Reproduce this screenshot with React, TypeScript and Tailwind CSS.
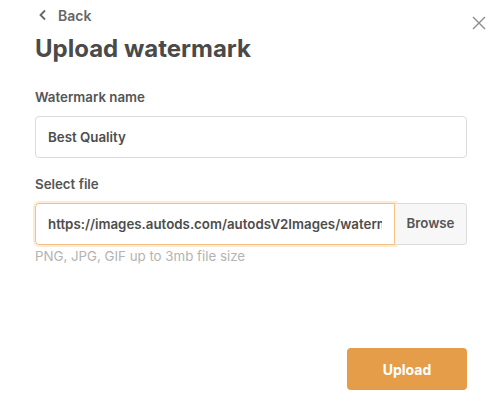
import { useState } from "react";

export default function App() {
  const [name, setName] = useState("Best Quality");
  const [url, setUrl] = useState(
    "https://images.autods.com/autodsV2Images/watermarks/best-quality.png"
  );

  return (
    <div className="relative h-[410px] w-[496px] bg-white px-[35px] font-['Inter','Liberation_Sans',sans-serif] text-[#4d4d4d]">
      <button className="absolute right-[10px] top-[10px] text-[#8c8c8c]" aria-label="Close">
        <svg width="14" height="14" viewBox="0 0 14 14" fill="none" stroke="currentColor" strokeWidth="1.4">
          <path d="M1 1l12 12M13 1L1 13" />
        </svg>
      </button>

      <div className="mt-[6px] flex h-[18px] items-center text-[14px] font-semibold text-[#666]">
        <svg width="10" height="12" viewBox="0 0 10 12" fill="none" stroke="currentColor" strokeWidth="1.8" className="ml-[3px]">
          <path d="M7 1.5L2.5 6 7 10.5" />
        </svg>
        <span className="ml-[10px]">Back</span>
      </div>

      <h1 className="mt-[10px] text-[24px] font-bold leading-[30px] text-[#4a4a4a]">Upload watermark</h1>

      <label className="mt-[23px] block text-[13.3px] font-semibold leading-[20px] text-[#555]">Watermark name</label>
      <input
        value={name}
        onChange={(e) => setName(e.target.value)}
        className="mt-[9px] block h-[42px] w-[432px] rounded-[4px] border border-[#dcdcdc] px-[12px] text-[13.3px] font-semibold text-[#4d4d4d] outline-none"
      />

      <label className="mt-[16px] block text-[13.3px] font-semibold leading-[20px] text-[#555]">Select file</label>
      <div className="mt-[9px] flex h-[42px] w-[432px]">
        <input
          value={url}
          onChange={(e) => setUrl(e.target.value)}
          className="h-full min-w-0 flex-1 rounded-l-[4px] border border-[#f5c185] px-[12px] text-[13.3px] font-semibold text-[#4d4d4d] shadow-[0_0_0_2px_#fdebd5] outline-none"
        />
        <button className="h-full w-[72px] rounded-r-[4px] border border-l-0 border-[#dcdcdc] bg-[#f7f7f7] text-[13.3px] font-semibold text-[#555]">
          Browse
        </button>
      </div>
      <p className="mt-[3px] text-[13.3px] leading-[16px] text-[#b3b3b3]">PNG, JPG, GIF up to 3mb file size</p>

      <div className="mt-[84px] flex w-[432px] justify-end">
        <button className="h-[42px] w-[120px] rounded-[4px] bg-[#e69d4a] text-[14px] font-bold text-white">Upload</button>
      </div>
    </div>
  );
}
